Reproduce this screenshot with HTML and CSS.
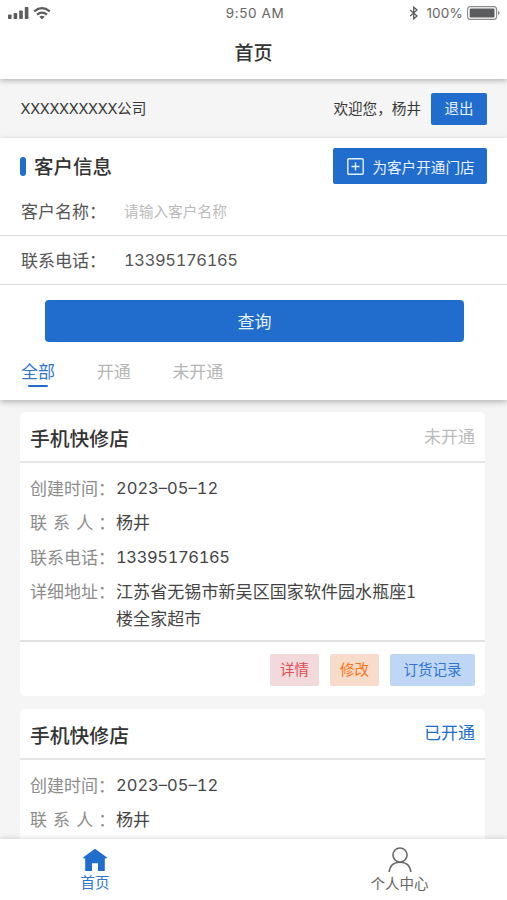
FILE: index.html
```html
<!DOCTYPE html>
<html lang="zh-CN">
<head>
<meta charset="utf-8">
<meta name="viewport" content="width=device-width, initial-scale=1">
<title>首页</title>
<link rel="stylesheet" href="styles.css">
</head>
<body>
<div class="app">
  <header class="top">
    <div class="status">
      <div class="status-left">
        <svg width="21" height="13" viewBox="0 0 21 13" fill="#5c5d5e"><rect x="0" y="7.5" width="3.6" height="4.5" rx=".8"/><rect x="5.6" y="6" width="3.6" height="6" rx=".8"/><rect x="11.2" y="3.5" width="3.6" height="8.5" rx=".8"/><rect x="16.8" y="0" width="3.6" height="12" rx=".8"/></svg>
        <svg width="18" height="13" viewBox="0 0 18 13" fill="none" stroke="#5c5d5e" stroke-width="2.2"><path d="M1.2 4.4Q9-2 16.8 4.4M4 7.6Q9 3.6 14 7.6"/><path d="M9 12.4 6.4 9.8Q9 7.8 11.6 9.8Z" fill="#5c5d5e" stroke="none"/></svg>
      </div>
      <div class="status-time">9:50 AM</div>
      <div class="status-right">
        <svg width="10" height="14" viewBox="0 0 10 14" fill="none" stroke="#5c5d5e" stroke-width="1.3"><path d="M1.2 4 8 10 4.7 12.8V1.2L8 4 1.2 10"/></svg>
        <span class="percent">100%</span>
        <svg width="33" height="14" viewBox="0 0 33 14"><rect x=".6" y=".6" width="29" height="12.8" rx="3" fill="none" stroke="#8b8b8b" stroke-width="1.1"/><rect x="2.7" y="2.6" width="24.8" height="8.8" rx="1" fill="#5c5d5e"/><path d="M31 4.8Q32.6 5.5 32.6 7T31 9.2Z" fill="#8b8b8b"/></svg>
      </div>
    </div>
    <h1 class="title">首页</h1>
  </header>

  <div class="account">
    <span class="company"><span class="mask">XXXXXXXXXX</span>公司</span>
    <span class="welcome">欢迎您，杨井</span>
    <button class="btn logout">退出</button>
  </div>

  <section class="search">
    <div class="search-head">
      <h2>客户信息</h2>
      <button class="btn open-store">
        <svg width="17" height="17" viewBox="0 0 17 17" fill="none" stroke="#e6f0ff" stroke-width="1.4"><rect x=".8" y=".8" width="15.4" height="15.4" rx="1"/><path d="M8.5 4.5v8M4.5 8.5h8"/></svg>
        <span>为客户开通门店</span>
      </button>
    </div>
    <div class="field name"><label>客户名称<span class="colon">：</span></label><span class="placeholder">请输入客户名称</span></div>
    <div class="field phone"><label>联系电话<span class="colon">：</span></label><span class="num tel">13395176165</span></div>
    <button class="btn query">查询</button>
    <nav class="tabs"><a class="active">全部</a><a>开通</a><a>未开通</a></nav>
  </section>

  <main class="list">
    <article class="card">
      <div class="card-head"><h3>手机快修店</h3><span class="state">未开通</span></div>
      <dl class="info">
        <dt>创建时间<span class="colon">：</span></dt><dd class="num">2023–05–12</dd>
        <dt class="spread">联 系 人 <span class="colon">：</span></dt><dd>杨井</dd>
        <dt>联系电话<span class="colon">：</span></dt><dd class="num tel">13395176165</dd>
        <dt>详细地址<span class="colon">：</span></dt><dd class="address">江苏省无锡市新吴区国家软件园水瓶座1<br>楼全家超市</dd>
      </dl>
      <div class="actions">
        <button class="act red">详情</button>
        <button class="act orange">修改</button>
        <button class="act blue">订货记录</button>
      </div>
    </article>
    <article class="card last">
      <div class="card-head"><h3>手机快修店</h3><span class="state on">已开通</span></div>
      <dl class="info">
        <dt>创建时间<span class="colon">：</span></dt><dd class="num">2023–05–12</dd>
        <dt class="spread">联 系 人 <span class="colon">：</span></dt><dd>杨井</dd>
      </dl>
    </article>
  </main>

  <footer class="tabbar">
    <a class="tab current">
      <svg width="26" height="24" viewBox="0 0 26 24" fill="#206dce"><path d="M13 .8 25 9.6 24.2 10.6H22.8V23H16V15.2H10V23H3.2V10.6H1.8L1 9.6Z"/></svg>
      <span>首页</span>
    </a>
    <a class="tab">
      <svg width="26" height="26" viewBox="0 0 26 26" fill="none" stroke="#666" stroke-width="1.6"><circle cx="13" cy="8" r="7"/><path d="M2 25C2.8 18.8 7 15.2 13 15.2S23.2 18.8 24 25"/></svg>
      <span>个人中心</span>
    </a>
  </footer>
</div>
</body>
</html>
```
FILE: styles.css
```css
* { box-sizing: border-box; margin: 0; padding: 0; }

body {
  font-family: "Noto Sans CJK SC", sans-serif;
  color: #444;
  background: #f5f5f5;
}

.app {
  display: flex;
  flex-direction: column;
  width: 507px;
  height: 900px;
  overflow: hidden;
}

svg { display: block; flex: none; }

.top {
  flex: none;
  height: 79px;
  background: #fff;
  box-shadow: 0 2px 5px rgba(0, 0, 0, .25);
  z-index: 1;
}

.status {
  display: grid;
  grid-template-columns: 1fr auto 1fr;
  align-items: center;
  height: 26px;
  padding: 0 7px 0 8px;
  font: 13.5px/26px Inter, sans-serif;
  color: #666;
}

.status-left { display: flex; gap: 4px; }
.status-time { letter-spacing: .6px; margin-left: 2px; }
.status-right { display: flex; align-items: center; justify-content: flex-end; }
.percent { margin: 0 4px 0 7px; letter-spacing: .2px; }

.title {
  font-size: 19px;
  font-weight: 500;
  line-height: 52px;
  text-align: center;
  color: #333;
}

.account {
  flex: none;
  display: flex;
  align-items: center;
  height: 59px;
  padding: 0 20px;
  font-size: 14.6px;
  color: #383838;
}

.company, .welcome { padding-bottom: 2px; }
.mask { font-family: Inter, sans-serif; letter-spacing: -.3px; margin-left: .5px; }
.welcome { margin-left: auto; }

.btn {
  border: 0;
  border-radius: 2px;
  background: #206dce;
  color: #e9f2ff;
  font-family: inherit;
}

.logout { width: 56px; height: 32px; margin-left: 10px; padding-bottom: 2px; font-size: 14.5px; }

.search {
  flex: none;
  height: 262px;
  background: #fff;
  box-shadow: 0 2px 6px rgba(0, 0, 0, .27);
  z-index: 1;
}

.search-head {
  display: flex;
  align-items: center;
  justify-content: space-between;
  height: 47px;
  padding: 9px 20px 0;
}

.search-head h2 {
  display: flex;
  align-items: center;
  font-size: 19.5px;
  font-weight: 500;
  line-height: 30px;
  color: #333;
}

.search-head h2::before {
  content: "";
  width: 6px;
  height: 19px;
  margin-right: 8px;
  border-radius: 3px;
  background: #206dce;
}

.open-store {
  display: flex;
  align-items: center;
  justify-content: center;
  gap: 8px;
  width: 154px;
  height: 36px;
  padding-left: 2px;
  font-size: 14.6px;
}

.field {
  display: flex;
  align-items: center;
  height: 49px;
  padding-left: 21px;
  border-bottom: 1px solid #dedede;
  font-size: 17px;
  color: #555;
}

.field label { width: 103px; }
.field.name { height: 51px; }
.field.phone { padding-bottom: 2px; }
.placeholder { font-size: 14.7px; color: #bbb; padding-top: 1px; }

.spread .colon { margin-left: -1px; }

.num {
  font-family: Inter, "Noto Sans CJK SC", sans-serif;
  font-size: 16.5px;
  font-variant-numeric: tabular-nums;
  padding-top: 1px;
}

.tel { letter-spacing: -.37px; }

.query {
  display: block;
  width: 419px;
  height: 42px;
  margin: 15px 0 0 45px;
  padding-bottom: 2px;
  border-radius: 4px;
  font-size: 17px;
}

.tabs {
  display: flex;
  gap: 41.7px;
  padding: 16px 21px 0;
  font-size: 17px;
  line-height: 26px;
  color: #b6b6b6;
}

.tabs .active { color: #2f75d0; }

.tabs .active::after {
  content: "";
  display: block;
  width: 20px;
  height: 2px;
  margin: 1px auto 0;
  border-radius: 1px;
  background: #206dce;
}

.list {
  flex: 1;
  display: flex;
  flex-direction: column;
  gap: 13px;
  min-height: 0;
  padding: 12px 22px 0 20px;
}

.card {
  flex: none;
  border-radius: 5px;
  background: #fff;
}

.card.last {
  flex: 1 0 auto;
  border-radius: 5px 5px 0 0;
}

.card.last .info { padding-bottom: 0; }

.card-head {
  display: flex;
  justify-content: space-between;
  height: 51px;
  padding: 0 10px;
  border-bottom: 2px solid #e6e6e6;
}

.card-head h3 {
  font-size: 19.8px;
  font-weight: 500;
  line-height: 52px;
  color: #333;
}

.state { font-size: 17px; line-height: 48px; color: #bbb; }
.state.on { color: #206dce; line-height: 46px; }

.info {
  display: grid;
  grid-template-columns: 86px 1fr;
  row-gap: 7.3px;
  padding: 11px 0 9px 10px;
  font-size: 17px;
  line-height: 27px;
  white-space: nowrap;
}

.info dt { color: #8c8c8c; }
.info .spread { word-spacing: 2.3px; }
.info dd { color: #444; }
.info .num { line-height: 26px; }
.info .address { letter-spacing: .08px; }

.actions {
  display: flex;
  justify-content: flex-end;
  gap: 11px;
  height: 56px;
  padding: 12px 10px 0 0;
  border-top: 2px solid #e2e2e2;
}

.act {
  width: 49px;
  height: 32px;
  padding-bottom: 2px;
  border: 0;
  border-radius: 2px;
  font: 14.5px "Noto Sans CJK SC", sans-serif;
}

.red { background: #f2d9dc; color: #e04b50; }
.orange { background: #f7dccb; color: #fb7417; }
.blue { width: 85px; background: #bfd7f5; color: #2f74d0; }

.tabbar {
  flex: none;
  display: grid;
  grid-template-columns: 190px 1fr;
  height: 61px;
  background: #fff;
  box-shadow: 0 -1px 5px rgba(0, 0, 0, .14);
  z-index: 1;
}

.tab {
  display: flex;
  flex-direction: column;
  align-items: center;
  padding: 8px 0 0 102px;
  font-size: 14.5px;
  line-height: 20px;
  color: #666;
}

.tab.current { padding: 9px 0 0; color: #2f75d0; }
```
